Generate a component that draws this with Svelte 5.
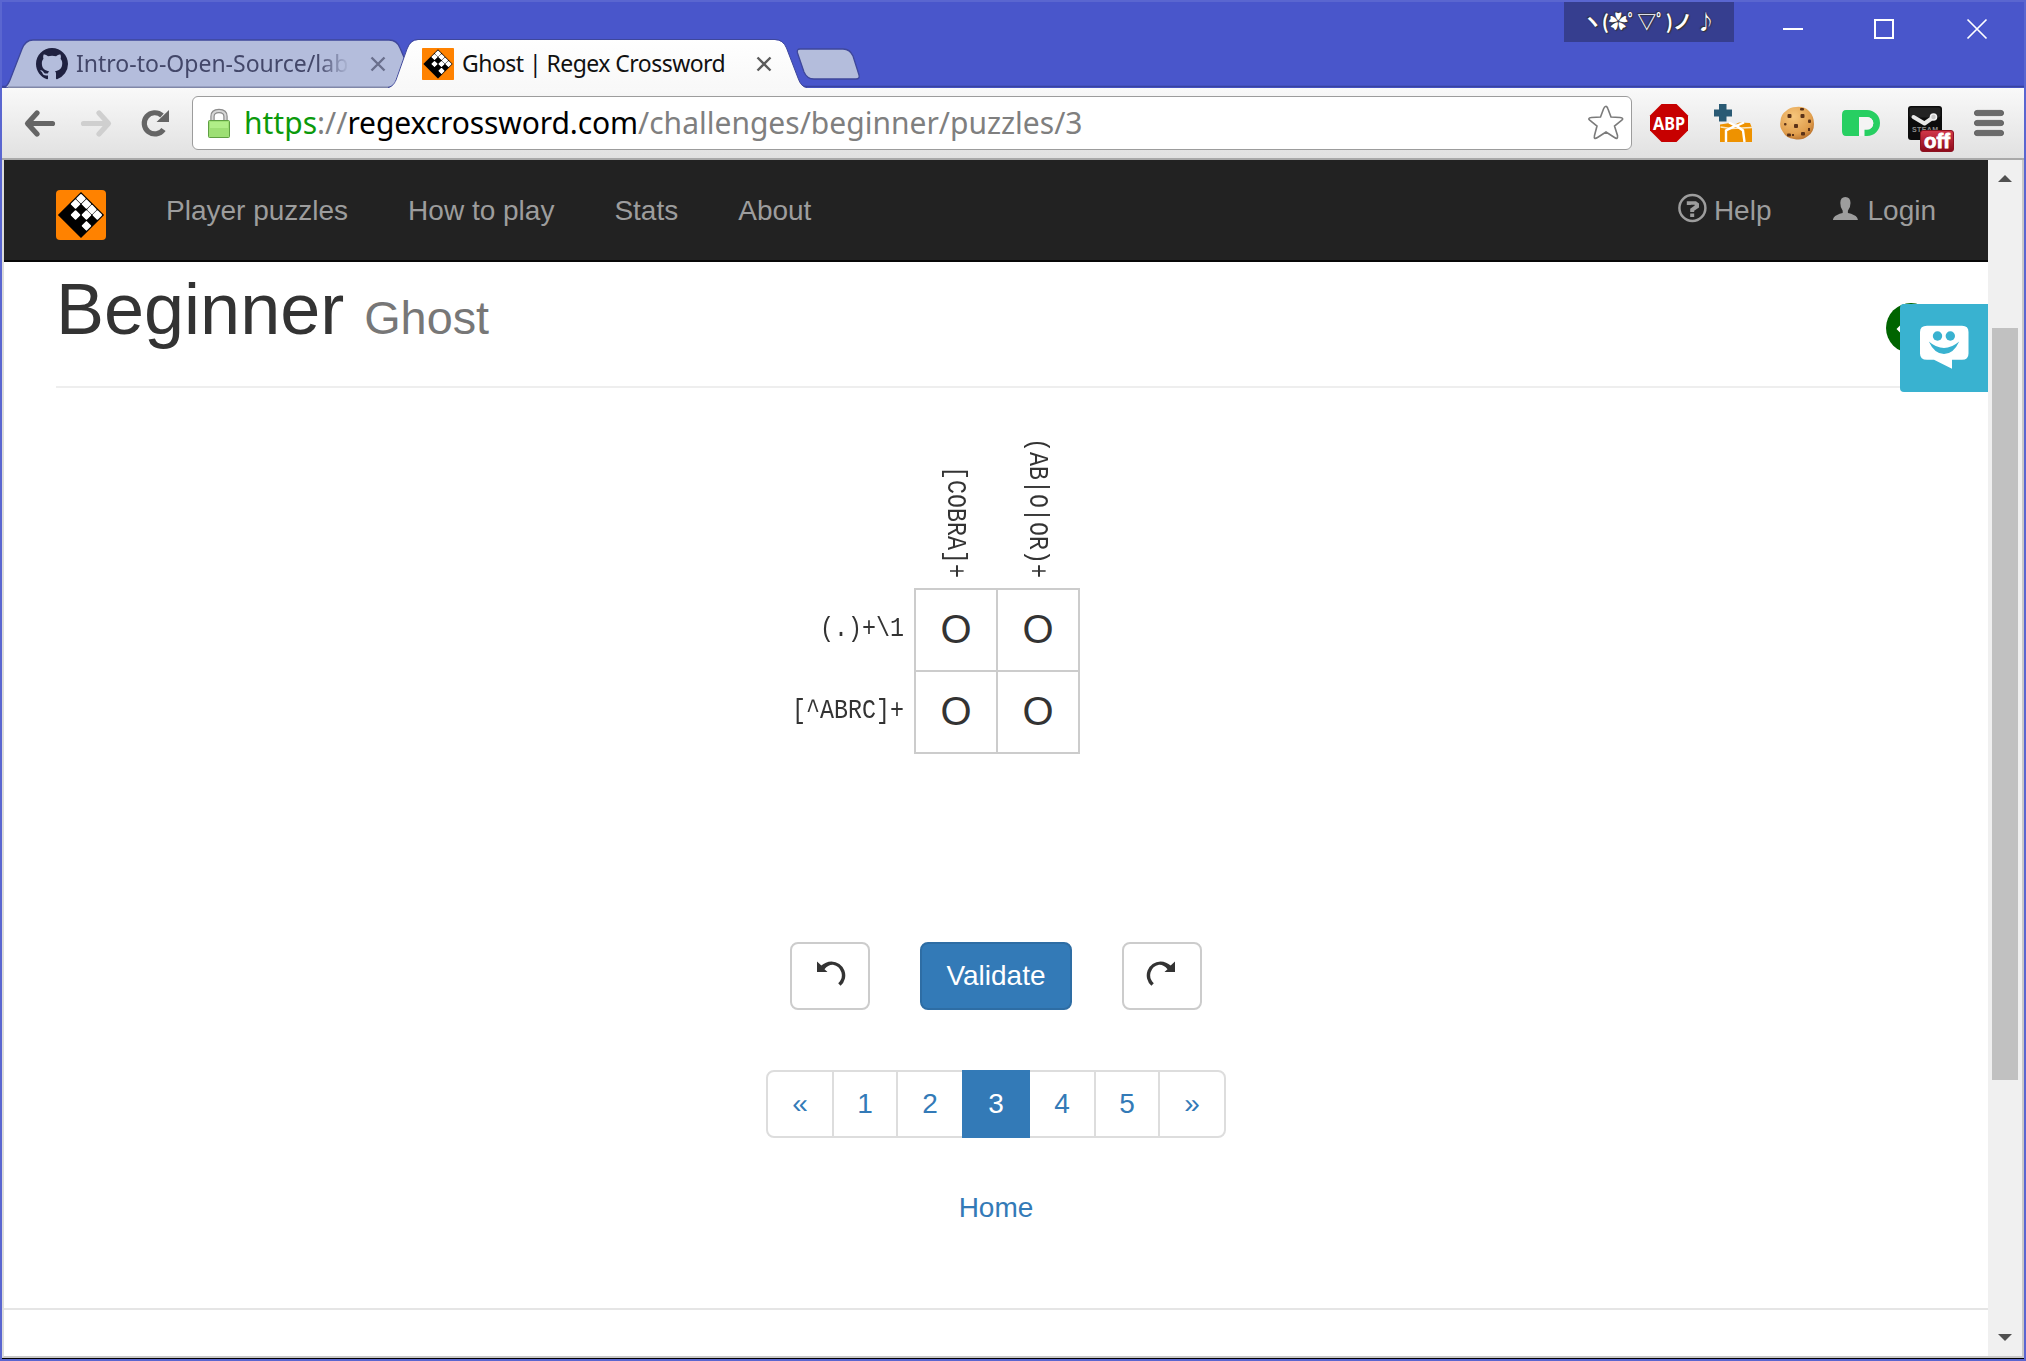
<script>
  const whites = ['0,0', '1,0', '2,0', '3,0', '0,1', '2,1', '1,2', '3,2'];
  const cells = [];
  for (let j = 0; j < 4; j++) {
    for (let i = 0; i < 4; i++) {
      cells.push({ x: i * 25, y: j * 25, fill: whites.includes(`${i},${j}`) ? '#fff' : '#000' });
    }
  }
  const navLinks = ['Player puzzles', 'How to play', 'Stats', 'About'];
  const columnClues = ['[COBRA]+', '(AB|O|OR)+'];
  const rows = [
    { clue: '(.)+\\1', letters: ['O', 'O'] },
    { clue: '[^ABRC]+', letters: ['O', 'O'] }
  ];
  const pages = ['«', '1', '2', '3', '4', '5', '»'];
  const current = '3';
</script>

{#snippet logo(size, radius)}
  <svg class="logo" width={size} height={size} viewBox="0 0 50 50">
    <rect width="50" height="50" rx={radius} fill="#ff8200" />
    <g transform="translate(25 3.2) rotate(45) scale(.308)">
      <rect x="-1" y="-1" width="102" height="102" fill="#000" stroke="#000" stroke-width="4" />
      {#each cells as c}
        <rect x={c.x + 0.8} y={c.y + 0.8} width="23.4" height="23.4" rx="3" fill={c.fill} />
      {/each}
    </g>
  </svg>
{/snippet}

{#snippet undoIcon(flip)}
  <svg class:flip width="32" height="26" viewBox="814 960 32 26"><path d="M819.200 963.500L817 961.500V972H827.500L824.500 969.200Q828 964.500 833 964.700A10.700 10.700 0 0 1 838.200 983.200L840.600 985.700A13.900 13.900 0 0 0 831.500 961.400Q825.500 961.600 821.300 965.600Z" fill="#333" /></svg>
{/snippet}

<div class="window">
  <header class="titlebar">
    <svg class="shapes" width="2022" height="86" viewBox="2 2 2022 86">
      <defs>
        <linearGradient id="tabShade" x1="0" y1="0" x2="0" y2="1">
          <stop offset="0" stop-color="#fff" />
          <stop offset="1" stop-color="#f8f8f8" />
        </linearGradient>
      </defs>
      <path d="M2 86.500H2024" stroke="#39439f" stroke-width="1.400" />
      <path d="M2 88C7 87 8 84 10 80L22 49Q25.500 40 33 40H389Q397 40 400 48L406 62L394 88Z" fill="#b4bddc" stroke="#3e479b" stroke-width="1.300" />
      <path d="M8 87.300H392" stroke="#8087a8" stroke-width="1.400" />
      <path d="M385 89C392 88 393 85 395 81L407 49Q410.500 40 418 40H775Q783 40 786.500 48L798 78Q801 87 807 88V89Z" fill="url(#tabShade)" />
      <path d="M388 87.500C393 86 394 84 396 80L407 49Q410.500 39.500 418 39.500H775Q783 39.500 786.500 48L798 78Q801 87 807 87.500" fill="none" stroke="#3e479b" stroke-width="1" />
      <path d="M800 49H843Q850 49 853 56L859 75Q860 79 856 79H814Q807 79 804 72L797.500 53Q796.500 49 800 49Z" fill="#b4bddc" stroke="#3e479b" stroke-width="1.300" />
    </svg>
    <div class="strip">
      <div class="tab first">
        <svg width="32" height="32" viewBox="0 0 16 16"><path fill="#1f2140" fill-rule="evenodd" d="M8 0C3.580 0 0 3.580 0 8c0 3.540 2.290 6.530 5.470 7.590.4.070.55-.17.55-.38 0-.19-.01-.82-.01-1.490-2.010.37-2.530-.49-2.690-.94-.09-.23-.48-.94-.82-1.130-.28-.15-.68-.52-.01-.53.63-.01 1.080.58 1.230.82.72 1.210 1.870.87 2.330.66.07-.52.28-.87.51-1.070-1.780-.2-3.640-.89-3.640-3.950 0-.87.31-1.590.82-2.150-.08-.2-.36-1.020.08-2.120 0 0 .67-.21 2.200.82.64-.18 1.320-.27 2-.27s1.360.09 2 .27c1.530-1.040 2.200-.82 2.200-.82.44 1.100.16 1.920.08 2.120.51.56.82 1.270.82 2.150 0 3.070-1.870 3.750-3.650 3.950.29.25.54.73.54 1.480 0 1.070-.01 1.930-.01 2.200 0 .21.15.46.55.38A8.010 8.010 0 0 0 16 8c0-4.420-3.580-8-8-8z" /></svg>
        <span class="title faded">Intro-to-Open-Source/lab</span>
        <svg class="x1" width="16" height="16" viewBox="0 0 16 16"><path d="M1.500 1.500l13 13M14.500 1.500l-13 13" stroke="#6a6f8c" stroke-width="2.400" /></svg>
      </div>
      <div class="tab second">
        {@render logo(32, 1)}
        <span class="title">Ghost | Regex Crossword</span>
        <svg class="x2" width="16" height="16" viewBox="0 0 16 16"><path d="M1.500 1.500l13 13M14.500 1.500l-13 13" stroke="#5c5c5c" stroke-width="2.400" /></svg>
      </div>
      <div class="kao">ヽ(✿ﾟ▽ﾟ)ノ ♪</div>
      <svg class="winbtns" width="290" height="42" viewBox="1734 2 290 42" fill="none" stroke="#fff">
        <path d="M1783 29H1803" stroke-width="2" />
        <rect x="1875" y="20" width="18" height="18" stroke-width="2" />
        <path d="M1967.500 19.500L1986.500 38.500M1986.500 19.500L1967.500 38.500" stroke-width="1.700" />
      </svg>
    </div>
  </header>

  <div class="toolbar">
    <svg width="190" height="70" viewBox="2 88 190 70">
      <g fill="none" stroke="#656565" stroke-width="5.200" stroke-linecap="round" stroke-linejoin="round">
        <path d="M37 113L27.500 123.500L37 134M28 123.500H52.500" />
        <path d="M99 113L108.500 123.500L99 134M108 123.500H83.500" stroke="#cfcfcf" />
        <path d="M163.500 129.500A10.600 10.600 0 1 1 162 115.500" stroke-linecap="butt" />
      </g>
      <path d="M169 110V122H156.500Z" fill="#656565" />
    </svg>
    <div class="omnibox">
      <svg width="24" height="32" viewBox="207 107 24 32">
        <path d="M212.500 121V116.500Q212.500 111 219 111T225.500 116.500V121" fill="none" stroke="#8b8b8b" stroke-width="4.400" />
        <path d="M212.500 121V116.500Q212.500 111 219 111T225.500 116.500V121" fill="none" stroke="#d7d7d7" stroke-width="2" />
        <rect x="208.500" y="120.500" width="21" height="17" rx="1" fill="#9ddf74" stroke="#5f9f43" />
        <rect x="210" y="122" width="18" height="6" fill="#b0ee88" />
      </svg>
      <span class="url"><span class="secure">https</span>://<b>regexcrossword.com</b>/challenges/beginner/puzzles/3</span>
      <svg class="star" width="38" height="38" viewBox="1587 104 38 38"><path d="M1605.500 106.500Q1607 106 1608 109L1611 117L1620 117.500Q1624.500 118 1621.500 120.500L1614.500 126L1617.500 135.500Q1618 140 1614.500 137.500L1606 132L1597.500 137.500Q1593.500 140 1594.500 135.500L1597 126L1590 120.500Q1587 118 1591.500 117.500L1600.500 117L1603.500 109Q1604.500 106.500 1605.500 106.500Z" fill="#fff" stroke="#7b7b7b" stroke-width="1.600" /></svg>
    </div>
    <div class="extensions">
      <svg width="64" height="70" viewBox="1637 88 64 70">
        <path d="M1661.500 104H1676.500L1688 115.500V130.500L1676.500 142H1661.500L1650 130.500V115.500Z" fill="#c70000" />
        <text x="1669" y="130" text-anchor="middle" textLength="32" lengthAdjust="spacingAndGlyphs" font-family="Noto Sans, sans-serif" font-weight="700" font-size="18" fill="#fff">ABP</text>
      </svg>
      <svg width="64" height="70" viewBox="1701 88 64 70">
        <path d="M1719 104H1726.500V109.500H1732V116.500H1726.500V121.500H1719V116.500H1714V109.500H1719Z" fill="#2a5a74" />
        <path d="M1720 124.500L1730 123L1735 124.500L1739 122.500L1750 123L1752 128V142H1720Z" fill="#ee9200" />
        <path d="M1720.500 127L1731 128.500L1752 127.500" fill="none" stroke="#fbe6c0" stroke-width="1.400" />
        <path d="M1726 142V130.500L1736 125.500L1743 130.500L1744.500 142M1736 126L1729 122.500M1736 126L1744 122.500" fill="none" stroke="#fff" stroke-width="2.400" />
      </svg>
      <svg width="64" height="70" viewBox="1765 88 64 70">
        <defs><radialGradient id="cookie" cx=".4" cy=".3" r=".75"><stop offset="0" stop-color="#f6c67c" /><stop offset=".7" stop-color="#e2a04f" /><stop offset="1" stop-color="#b8702b" /></radialGradient></defs>
        <path d="M1796 107Q1804 106 1809 111Q1814 116 1814 124Q1814 132 1808 136Q1802 141 1794 139Q1786 138 1783 132Q1779 127 1780.500 121Q1781 114 1786 111Q1790 107 1796 107Z" fill="url(#cookie)" />
        <g fill="#5b3218"><rect x="1787.500" y="114" width="4" height="4" rx="1" /><rect x="1800.500" y="114" width="4" height="4" rx="1" /><rect x="1794" y="124" width="4" height="4" rx="1" /><rect x="1801" y="132" width="4" height="3.500" rx="1" /><rect x="1800" y="108" width="4" height="2.500" rx="1" /><rect x="1808" y="119.500" width="3" height="3.500" rx="1" /><rect x="1787" y="133.500" width="4" height="3" rx="1" /><rect x="1784" y="123" width="2.500" height="2.500" rx="1" /><rect x="1792" y="134" width="2" height="2" /><rect x="1808" y="128" width="2" height="3" /></g>
      </svg>
      <svg width="64" height="70" viewBox="1829 88 64 70">
        <path d="M1846 110H1867A13 13 0 0 1 1867 136H1862.500V129.500H1867A6.300 6.300 0 0 0 1867 116.900H1859V136H1846Q1842 136 1842 131V115Q1842 110 1846 110Z" fill="#27cf62" />
        <path d="M1859 117H1867A6.300 6.300 0 0 1 1867 129.600H1864.500V136H1859Z" fill="#f4f4f4" />
      </svg>
      <svg width="64" height="70" viewBox="1893 88 64 70">
        <rect x="1908" y="106" width="34" height="34" rx="3" fill="#0c0c0c" />
        <rect x="1909.500" y="107.500" width="31" height="10" rx="2" fill="#333" opacity=".6" />
        <path d="M1913.500 117L1924.500 123.500L1933 117.500" fill="none" stroke="#e8e8e8" stroke-width="4" stroke-linecap="round" stroke-linejoin="round" />
        <circle cx="1933.500" cy="117" r="3" fill="#c9c9c9" stroke="#f2f2f2" stroke-width="1.600" />
        <text x="1925" y="132" text-anchor="middle" textLength="26" font-family="Liberation Sans, sans-serif" font-weight="700" font-size="7" fill="#8d8d8d">STEAM</text>
        <defs><linearGradient id="off" x1="0" y1="0" x2="0" y2="1"><stop offset="0" stop-color="#d2374a" /><stop offset="1" stop-color="#8c0a1a" /></linearGradient></defs>
        <rect x="1920.500" y="130.500" width="33" height="21" rx="2.500" fill="url(#off)" stroke="#8c1220" />
        <text x="1937" y="148" text-anchor="middle" textLength="26" lengthAdjust="spacingAndGlyphs" font-family="Liberation Sans, sans-serif" font-weight="700" font-size="20" fill="#fff" stroke="#fff" stroke-width=".8">off</text>
      </svg>
      <svg width="64" height="70" viewBox="1957 88 64 70" fill="#6b6b6b" stroke="#555" stroke-width=".8">
        <rect x="1974.400" y="110.400" width="29.200" height="5.200" rx="2.600" />
        <rect x="1974.400" y="120.400" width="29.200" height="5.200" rx="2.600" />
        <rect x="1974.400" y="130.400" width="29.200" height="5.200" rx="2.600" />
      </svg>
    </div>
  </div>

  <div class="viewport">
    <div class="page">
      <nav>
        <a class="brand" href="#home">{@render logo(50, 4)}</a>
        {#each navLinks as link}<a href="#nav">{link}</a>{/each}
        <span class="grow"></span>
        <a class="icon help" href="#help">
          <svg width="30" height="30" viewBox="1678 193 30 30"><circle cx="1692.400" cy="208" r="13" fill="none" stroke="#9d9d9d" stroke-width="2.500" /><path d="M1686.800 205V201.200H1696L1699 203.500V207.500L1694.200 210.800V212H1690.200V208.800L1694.700 205.500V204.700H1690.800V205ZM1690.200 213.500H1694.200V217H1690.200Z" fill="#9d9d9d" /></svg>
          Help</a>
        <a class="icon" href="#login">
          <svg width="28" height="28" viewBox="1831.500 194 28 28"><path d="M1845.800 197Q1851 197 1851 203Q1851 208 1848.400 210.800V213Q1855.500 214.500 1857.500 217.500Q1858.400 219 1858.400 220H1833.400Q1833.400 219 1834.300 217.500Q1836.500 214.500 1843.200 213V210.800Q1840.800 208 1840.800 203Q1840.800 197 1845.800 197Z" fill="#9d9d9d" /></svg>
          Login</a>
      </nav>

      <main>
        <div class="heading">
          <h1>Beginner <small>Ghost</small></h1>
          <svg class="next" width="50" height="50" viewBox="1886 303 50 50"><circle cx="1911" cy="328" r="25" fill="#006400" /><path d="M1896.500 329L1906 319.500V325.500H1925V332.500H1906V338.500Z" fill="#fff" /></svg>
        </div>

        <div class="puzzle">
          <span></span>
          {#each columnClues as clue}<div class="col"><span>{clue}</span></div>{/each}
          {#each rows as row}
            <div class="row"><span>{row.clue}</span></div>
            {#each row.letters as letter}<div class="cell">{letter}</div>{/each}
          {/each}
        </div>

        <div class="actions">
          <button aria-label="Undo">{@render undoIcon(false)}</button>
          <button class="primary">Validate</button>
          <button aria-label="Redo">{@render undoIcon(true)}</button>
        </div>

        <ul class="pagination">
          {#each pages as p}<li><a class:active={p === current} href="#page">{p}</a></li>{/each}
        </ul>

        <a class="home" href="#home">Home</a>
      </main>
      <footer></footer>

      <div class="chat">
        <svg width="50" height="46" viewBox="1920 324 50 46"><path d="M1927 325.700H1962Q1968.500 325.700 1968.500 332V353.500Q1968.500 359.800 1962 359.800H1952V368.700L1934 359.800H1927Q1920 359.800 1920 353.500V332Q1920 325.700 1927 325.700Z" fill="#fff" /><circle cx="1937.500" cy="336" r="4.700" fill="#39b2d0" /><circle cx="1950.300" cy="336" r="4.700" fill="#39b2d0" /><path d="M1928.800 341.500Q1944 354.500 1959.200 341.500Q1953.500 354 1944 354T1928.800 341.500Z" fill="#39b2d0" /></svg>
      </div>
    </div>
    <div class="scrollbar">
      <svg width="14" height="7" viewBox="0 0 14 7"><path d="M0 7L7 0L14 7Z" fill="#505050" /></svg>
      <div class="thumb"></div>
      <svg width="14" height="7" viewBox="0 0 14 7"><path d="M0 0L7 7L14 0Z" fill="#505050" /></svg>
    </div>
  </div>
</div>

<style>
  :global(body) { margin: 0; background: #fff; }
  .window {
    box-sizing: border-box; width: 2026px; height: 1361px; overflow: hidden;
    border: 2px solid #5a66d0; background: #fff;
    display: flex; flex-direction: column;
    font-family: "Liberation Sans", Arial, sans-serif; font-size: 28px; color: #333;
  }
  svg { display: block; flex: none; }
  a { text-decoration: none; }

  .titlebar { display: grid; height: 86px; background: #4956cb; flex: none; }
  .shapes, .strip { grid-area: 1 / 1; }
  .strip { display: flex; align-items: flex-start; }
  .tab { display: flex; align-items: center; height: 32px; margin-top: 46px; box-sizing: border-box; font-family: "Noto Sans", sans-serif; font-size: 23px; }
  .first { width: 388px; padding-left: 34px; }
  .second { width: 420px; padding-left: 32px; color: #111; }
  .title { display: block; flex: none; line-height: 32px; padding-bottom: 2px; white-space: nowrap; margin-left: 8px; }
  .first .title { width: 274px; color: #434769; }
  .second .title { width: 264px; letter-spacing: -.54px; }
  .faded { -webkit-mask-image: linear-gradient(90deg, #000 88%, transparent); mask-image: linear-gradient(90deg, #000 88%, transparent); }
  .x1 { margin-left: 20px; }
  .x2 { margin-left: 30px; }
  .kao {
    box-sizing: border-box; width: 170px; height: 40px; margin-left: auto; background: #363e8f; color: #fff;
    font: 700 19px/38px "Noto Sans CJK JP", "DejaVu Sans", sans-serif; text-align: center; white-space: nowrap;
    text-shadow: 1px 1px 1px #333, -1px -1px 1px #333;
  }

  .toolbar { display: flex; flex: none; height: 70px; border-bottom: 2px solid #a9a9a9; background: linear-gradient(#f9f9f9, #e1e1e1); }
  .omnibox {
    box-sizing: border-box; width: 1440px; height: 54px; margin: 8px 5px 0 0; padding: 0 6px 0 14px;
    border: 1px solid #9c9c9c; border-radius: 6px; background: #fff; display: flex; align-items: center;
  }
  .url { margin-left: 13px; font: 30px/50px "Noto Sans", sans-serif; color: #7f7f7f; white-space: nowrap; }
  .url b { font-weight: 400; color: #000; letter-spacing: -.1px; }
  .secure { color: #0b9a0b; }
  .star { margin-left: auto; }
  .extensions { display: flex; }

  .viewport { display: flex; flex: 1; min-height: 0; border: solid #c8c8c8; border-width: 0 2px 2px 2px; border-left-color: #dcdcdc; box-shadow: 0 1px #000; margin-bottom: 1px; }
  .page { position: relative; width: 1984px; display: flex; flex-direction: column; background: #fff; }
  nav { display: flex; align-items: center; box-sizing: border-box; height: 102px; flex: none; padding: 0 22px 0 52px; background: #222; border-bottom: 2px solid #080808; }
  nav a { padding: 1px 30px 0; color: #9d9d9d; line-height: 99px; white-space: nowrap; }
  nav .brand { padding: 0; margin-right: 30px; margin-top: 10px; }
  .grow { flex: 1; }
  .icon { display: flex; gap: 8px; }
  .icon svg { margin-top: 33px; }
  .help svg { margin: 32px -2px 0 0; }

  main { display: flex; flex-direction: column; align-items: center; flex: none; height: 1046px; }
  .heading { display: flex; box-sizing: border-box; align-self: stretch; height: 126px; margin: 0 52px; padding-top: 7px; border-bottom: 2px solid #eee; }
  h1 { margin: 0; font-size: 72px; line-height: 80px; font-weight: 400; }
  small { font-size: 46.8px; color: #777; }
  .next { margin: 34px 0 0 auto; }

  .puzzle { display: grid; grid-template-columns: 310px 82px 82px; grid-template-rows: 200px 82px 82px; width: 474px; margin-right: 310px; font-family: "Liberation Mono", monospace; font-size: 27.5px; }
  .col { display: flex; align-items: flex-end; justify-content: center; padding-bottom: 10px; }
  .col span { writing-mode: vertical-rl; transform: scaleY(.848); transform-origin: bottom; white-space: nowrap; line-height: 30px; }
  .row { display: flex; align-items: center; justify-content: flex-end; padding: 0 10px 2px 0; }
  .row span { transform: scaleX(.848); transform-origin: right; white-space: nowrap; }
  .cell {
    font: 40px/82px "Liberation Sans", Arial, sans-serif; text-align: center;
    box-shadow: inset 0 0 0 2px #ccc; width: 84px; height: 84px;
  }

  .actions { display: flex; gap: 50px; margin-top: 190px; }
  button { box-sizing: border-box; height: 68px; width: 80px; border: 2px solid #ccc; border-radius: 8px; background: #fff; display: flex; justify-content: center; font: inherit; line-height: 64px; padding: 0; }
  button svg { margin-top: 16px; }
  .flip { transform: scaleX(-1); }
  .primary { width: 152px; background: #337ab7; border-color: #2e6da4; color: #fff; }

  .pagination { display: flex; list-style: none; margin: 60px 0 0; padding: 0; }
  .pagination a { display: block; box-sizing: border-box; width: 68px; height: 68px; text-align: center; margin-left: -2px; line-height: 64px; border: 2px solid #ddd; color: #337ab7; background: #fff; }
  .pagination li:nth-child(2) a, .pagination li:nth-child(6) a { width: 66px; }
  .pagination a.active { position: relative; background: #337ab7; border-color: #337ab7; color: #fff; }
  .pagination li:first-child a { margin-left: 0; border-radius: 8px 0 0 8px; }
  .pagination li:last-child a { border-radius: 0 8px 8px 0; }
  .home { margin-top: 50px; line-height: 40px; color: #337ab7; }
  footer { flex: 1; border-top: 2px solid #e5e5e5; }

  .chat { position: absolute; right: 0; top: 144px; width: 88px; height: 88px; border-radius: 4px 0 0 4px; background: #39b2d0; display: flex; padding: 20px 0 0 20px; box-sizing: border-box; }

  .scrollbar { width: 34px; display: flex; flex-direction: column; align-items: center; background: #f0f0f0; padding: 15px 0; box-sizing: border-box; }
  .thumb { width: 26px; height: 752px; margin: 146px 0 auto; background: #c1c1c1; }
</style>
